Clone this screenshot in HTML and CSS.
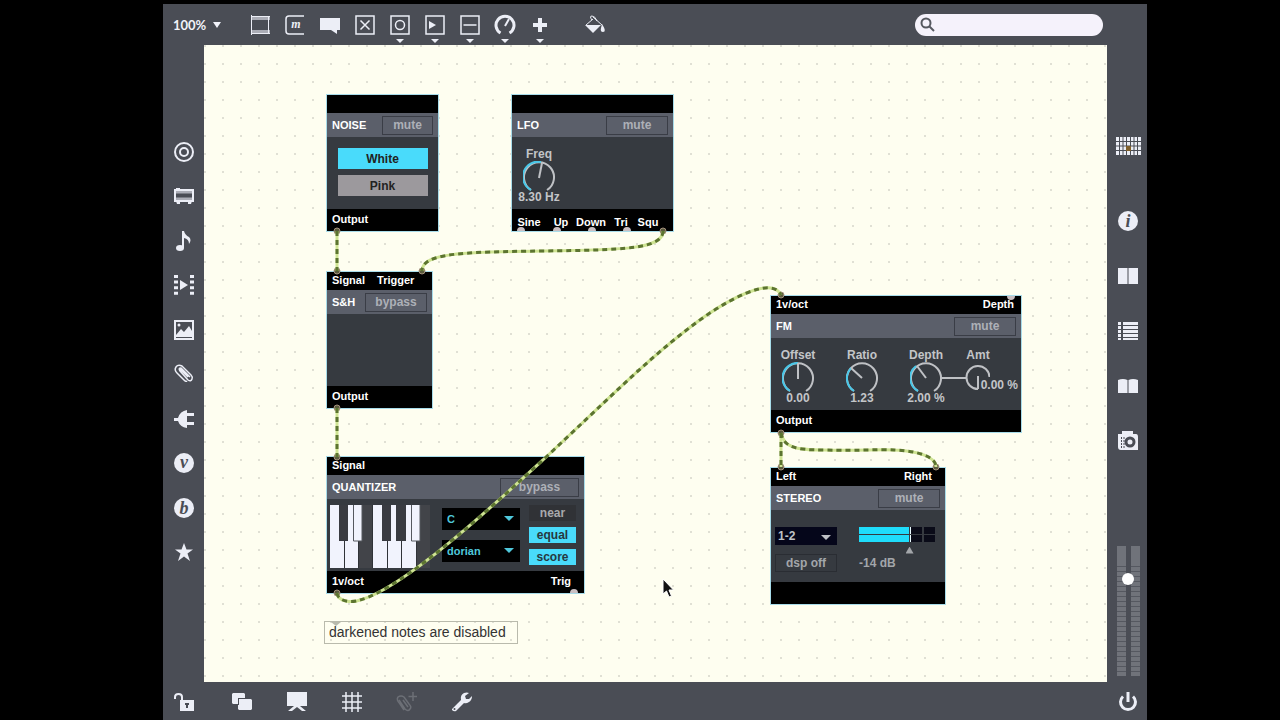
FILE: index.html
```
<!DOCTYPE html>
<html lang="en">
<head>
    <meta charset="UTF-8">
    <meta name="viewport" content="width=device-width, initial-scale=1.0">
    <title>Patcher</title>
    <link rel="stylesheet" href="styles.css">
</head>
<body>
    <div class="app">
        <!-- Top toolbar -->
        <header class="toolbar">
            <button class="zoom-level">100% <span class="caret"></span></button>
            <div class="tools">
                <button class="icon" aria-label="Object"><svg viewBox="0 0 20 20"><path class="line thin" d="M1.500 0V20M18.500 1V19M2 1.500H20M2 18.500H20"/><path class="line dim" d="M2 3.500H20M2 16.500H20"/></svg></button>
                <button class="icon" aria-label="Message"><svg viewBox="0 0 20 20"><path class="line fine" d="M19 1H4Q1 1 1 4V16Q1 19 4 19H19"/><text x="11" y="13" class="glyph small">m</text></svg></button>
                <button class="icon" aria-label="Comment"><svg viewBox="0 0 20 20"><path d="M0 3H20V15H17V19L11 15H0Z"/></svg></button>
                <button class="icon" aria-label="Toggle"><svg viewBox="0 0 20 20"><path class="line fine" d="M1 1H19V19H1ZM5.500 5.500L14.500 14.500M14.500 5.500L5.500 14.500"/></svg></button>
                <button class="icon more" aria-label="Button"><svg viewBox="0 0 20 20"><path class="line fine" d="M1 1H19V19H1Z"/><circle class="line fine" cx="10" cy="10" r="4.500"/></svg></button>
                <button class="icon more" aria-label="Number"><svg viewBox="0 0 20 20"><path class="line fine" d="M1 1H19V19H1Z"/><path d="M4 6L11 10L4 14Z"/></svg></button>
                <button class="icon more" aria-label="Slider"><svg viewBox="0 0 20 20"><path class="line fine" d="M1 1H19V19H1ZM3.500 10H16.500"/></svg></button>
                <button class="icon more" aria-label="Dial"><svg viewBox="0 0 20 20"><path class="line thick" d="M5.500 18A9 9 0 1 1 14.500 18"/><path class="line" d="M10 11L14 4"/></svg></button>
                <button class="icon more" aria-label="Add"><svg viewBox="0 0 20 20"><path d="M8 3H12V8H17V12H12V17H8V12H3V8H8Z"/></svg></button>
                <button class="icon fill-tool" aria-label="Format"><svg viewBox="0 0 20 20"><path class="line thin" d="M7 5Q4 1 7 1Q10 1 12 6M8 2L17 10M8 4L1 10"/><path d="M0 10H16L8 18Z"/><path d="M17 9Q22 17 18 17Q15 17 16 13Z"/></svg></button>
            </div>
            <label class="search">
                <svg viewBox="0 0 18 18" aria-hidden="true"><circle cx="7" cy="7" r="4.500"/><path d="M10.500 10.500L15 15"/></svg>
                <input type="search" aria-label="Search">
            </label>
        </header>

        <!-- Left rail -->
        <nav class="rail rail-left" aria-label="Browser">
            <button class="icon" aria-label="Objects"><svg viewBox="0 0 20 20"><circle class="line" cx="10" cy="10" r="9"/><circle class="line" cx="10" cy="10" r="4"/></svg></button>
            <button class="icon" aria-label="Devices"><svg viewBox="0 0 20 20"><path class="line" d="M1 4H19V15H1Z"/><path class="line dim" d="M2 6H18M2 13H18"/><path d="M2 15H6V18H3ZM14 15H18L17 18H14ZM2 2H6V4H2Z"/></svg></button>
            <button class="icon" aria-label="Audio"><svg viewBox="0 0 20 20"><ellipse cx="6" cy="17" rx="4" ry="3"/><path d="M8 0H10Q11 4 15 6Q18 9 15 13Q15 8 10 7V17H8Z"/></svg></button>
            <button class="icon" aria-label="Video"><svg viewBox="0 0 20 20"><path class="line film" d="M2 0V20M18 0V20"/><path d="M6 5L14 10L6 15Z"/></svg></button>
            <button class="icon" aria-label="Images"><svg viewBox="0 0 20 20"><path class="line" d="M1 1H19V19H1Z"/><path d="M2 15L7 9L10 12L15 6L18 11V17H2Z"/><circle cx="5" cy="5" r="1.500"/></svg></button>
            <button class="icon" aria-label="Snippets"><svg viewBox="0 0 20 20"><path class="line fine" d="M6 7L14 16Q17 18 18 15Q19 13 17 11L8 2Q4 0 2 3Q0 6 3 9L10 16Q12 18 13 17M6 5L14 13M6 7Q4 4 7 4L16 13"/></svg></button>
            <button class="icon" aria-label="Plug-ins"><svg viewBox="0 0 20 20"><path d="M0 9H4Q6 2 13 1V4H20V7H13V13H20V16H13V19Q6 18 4 12H0Z"/></svg></button>
            <button class="icon" aria-label="Vizzie"><svg viewBox="0 0 20 20"><circle cx="10" cy="10" r="10"/><text x="10" y="15" class="glyph cut">v</text></svg></button>
            <button class="icon" aria-label="Beap"><svg viewBox="0 0 20 20"><circle cx="10" cy="10" r="10"/><text x="10" y="16" class="glyph cut">b</text></svg></button>
            <button class="icon" aria-label="Favorites"><svg viewBox="0 0 20 20"><path d="M10 1L12.500 7.500H19L13.500 11.500L16 19L10 14.500L4 19L6.500 11.500L1 7.500H7.500Z"/></svg></button>
        </nav>

        <!-- Patch canvas -->
        <main class="canvas">
            <section class="module noise">
                <div class="ports"></div>
                <div class="title-bar"><h2>NOISE</h2><button class="small">mute</button></div>
                <div class="panel choices">
                    <button class="on">White</button>
                    <button>Pink</button>
                </div>
                <div class="ports"><span>Output</span></div>
            </section>

            <section class="module lfo">
                <div class="ports"></div>
                <div class="title-bar"><h2>LFO</h2><button>mute</button></div>
                <div class="panel knobs">
                    <div class="knob">
                        <span>Freq</span>
                        <svg viewBox="0 0 32 32"><path class="ring" d="M8 29A15 15 0 1 1 24 29"/><path class="level" d="M8 29A15 15 0 0 1 18 1"/><path class="ring" d="M16 17L19 2"/></svg>
                        <span>8.30 Hz</span>
                    </div>
                </div>
                <div class="ports shapes"><span>Sine</span><span>Up</span><span>Down</span><span>Tri</span><span>Squ</span></div>
            </section>

            <section class="module sample-hold">
                <div class="ports"><span>Signal</span><span>Trigger</span></div>
                <div class="title-bar"><h2>S&amp;H</h2><button>bypass</button></div>
                <div class="panel"></div>
                <div class="ports"><span>Output</span></div>
            </section>

            <section class="module quantizer">
                <div class="ports"><span>Signal</span></div>
                <div class="title-bar"><h2>QUANTIZER</h2><button class="wide">bypass</button></div>
                <div class="panel scale">
                    <svg class="keys" viewBox="0 0 100 63">
                        <path class="key-off" d="M29 0H42V63H29ZM87 0H100V63H87Z"/>
                        <path class="key" d="M0 0H14V63H0ZM15 0H28V63H15ZM43 0H57V63H43ZM58 0H71V63H58ZM72 0H86V63H72Z"/>
                        <path class="key-dark" d="M9 0H18V36H9ZM52 0H61V36H52ZM66 0H76V36H66Z"/>
                        <path class="key edged" d="M23.500 -1H32V36H23.500ZM81.500 -1H90V36H81.500Z"/>
                    </svg>
                    <div class="menus">
                        <div class="menu"><select aria-label="Root"><option>C</option></select></div>
                        <div class="menu"><select aria-label="Scale"><option>dorian</option></select></div>
                    </div>
                    <div class="modes">
                        <button class="off">near</button>
                        <button>equal</button>
                        <button>score</button>
                    </div>
                </div>
                <div class="ports"><span>1v/oct</span><span>Trig</span></div>
            </section>

            <section class="module fm">
                <div class="ports"><span>1v/oct</span><span>Depth</span></div>
                <div class="title-bar"><h2>FM</h2><button>mute</button></div>
                <div class="panel knobs">
                    <div class="knob">
                        <span>Offset</span>
                        <svg viewBox="0 0 32 32"><path class="ring" d="M8 29A15 15 0 1 1 24 29"/><path class="level" d="M8 29A15 15 0 0 1 16 1"/><path class="ring" d="M16 17V1"/></svg>
                        <span>0.00</span>
                    </div>
                    <div class="knob">
                        <span>Ratio</span>
                        <svg viewBox="0 0 32 32"><path class="ring" d="M8 29A15 15 0 1 1 24 29"/><path class="level" d="M8 29A15 15 0 0 1 5 6"/><path class="ring" d="M16 16L5 6"/></svg>
                        <span>1.23</span>
                    </div>
                    <div class="knob">
                        <span>Depth</span>
                        <svg viewBox="0 0 32 32"><path class="ring" d="M8 29A15 15 0 1 1 24 29"/><path class="level" d="M8 29A15 15 0 0 1 6 4"/><path class="ring" d="M16 16L7 4"/></svg>
                        <span>2.00 %</span>
                    </div>
                    <div class="amount">
                        <span>Amt</span>
                        <svg viewBox="0 0 48 32"><path class="ring" d="M0 16H24M36 27A11.500 11.500 0 1 1 47.500 15M36 14V27"/></svg>
                        <span class="amount-value">0.00 %</span>
                    </div>
                </div>
                <div class="ports"><span>Output</span></div>
            </section>

            <section class="module stereo">
                <div class="ports"><span>Left</span><span>Right</span></div>
                <div class="title-bar"><h2>STEREO</h2><button>mute</button></div>
                <div class="panel mixer">
                    <div class="menu"><select aria-label="Output channels"><option>1-2</option></select></div>
                    <input class="gain" type="range" min="-70" max="6" value="-18" aria-label="Gain">
                    <button>dsp off</button>
                    <span class="db">-14 dB</span>
                </div>
                <div class="ports"></div>
            </section>

            <p class="comment">darkened notes are disabled</p>

            <!-- Patch cords -->
            <svg class="cords">
                <path class="jack" d="M313 186a4 4 0 0 1 8 0M349 186a4 4 0 0 1 8 0M384 186a4 4 0 0 1 8 0M419 186a4 4 0 0 1 8 0M366 548a4 4 0 0 1 8 0M803 251a4 4 0 0 0 8 0"/>
                <g class="jack live">
                    <circle cx="133" cy="186" r="3"/><circle cx="459" cy="186" r="3"/><circle cx="133" cy="226" r="3"/><circle cx="218" cy="226" r="3"/>
                    <circle cx="133" cy="363" r="3"/><circle cx="133" cy="412" r="3"/><circle cx="133" cy="548" r="3"/><circle cx="577" cy="250" r="3"/>
                    <circle cx="577" cy="388" r="3"/><circle cx="577" cy="422" r="3"/><circle cx="732" cy="422" r="3"/>
                </g>
                <g class="cord">
                    <path d="M133 186V226M133 363V412M577 388V422"/>
                    <path d="M459 186C459 204 420 205 339 206S218 208 218 226"/>
                    <path d="M133 548C134 557 148 558 156 555C200 543 290 460 340 414C400 358 440 318 480 287C520 255 568 230 577 250"/>
                    <path d="M577 388C580 402 590 405 620 405C655 406 675 404 690 405C715 406 732 412 732 422"/>
                </g>
                <g class="cord dashes">
                    <path d="M133 186V226M133 363V412M577 388V422"/>
                    <path d="M459 186C459 204 420 205 339 206S218 208 218 226"/>
                    <path d="M133 548C134 557 148 558 156 555C200 543 290 460 340 414C400 358 440 318 480 287C520 255 568 230 577 250"/>
                    <path d="M577 388C580 402 590 405 620 405C655 406 675 404 690 405C715 406 732 412 732 422"/>
                </g>
            </svg>

            <svg class="pointer" viewBox="0 0 12 20"><path d="M1 1V16L4.500 13L7 19L9.500 18L7 12H11.500Z"/></svg>
        </main>

        <!-- Right rail -->
        <aside class="rail rail-right">
            <button class="icon piano" aria-label="Grid keyboard"><svg viewBox="0 0 25 20"><path d="M0 1H25V19H0Z"/><path class="cut-line" d="M3.500 1V19M7 1V19M10.500 1V19M14.500 1V19M18 1V19M21.500 1V19M0 5.500H25M0 10H25M0 14.500H25"/><rect class="spot" x="10" y="10" width="5" height="5"/></svg></button>
            <button class="icon" aria-label="Inspector"><svg viewBox="0 0 20 20"><circle cx="10" cy="10" r="10"/><text x="10" y="16" class="glyph cut">i</text></svg></button>
            <button class="icon" aria-label="Reference"><svg viewBox="0 0 20 20"><path d="M0 2H9.500V18H0ZM10.500 2H20V18H10.500Z"/></svg></button>
            <button class="icon" aria-label="Console"><svg viewBox="0 0 20 20"><path d="M0 1H3V4H0ZM5 1H20V4H5ZM0 5H3V8H0ZM5 5H20V8H5ZM0 9H3V12H0ZM5 9H20V12H5ZM0 13H3V16H0ZM5 13H20V16H5ZM0 17H3V19H0ZM5 17H20V19H5Z"/></svg></button>
            <button class="icon" aria-label="Lessons"><svg viewBox="0 0 20 20"><path d="M0 4Q5 2 9.500 4V17H0ZM10.500 4Q15 2 20 4V17H10.500Z"/></svg></button>
            <button class="icon" aria-label="Snapshots"><svg viewBox="0 0 20 20"><path d="M0 3H4V0H15V3H18Q20 3 20 6V19H3Q0 19 0 16Z"/><circle class="cut-line lens" cx="12" cy="11" r="4"/><path class="cut-line film" d="M3.500 6V17M6 6V17"/></svg></button>
            <input class="volume" type="range" value="77" aria-label="Volume">
        </aside>

        <!-- Bottom toolbar -->
        <footer class="toolbar bottom">
            <button class="icon" aria-label="Lock"><svg viewBox="0 0 20 20"><path class="line" d="M1 7V5Q1 2 4.500 2T8 5V9"/><path d="M6 8H20V19H6Z"/><path class="cut-fill" d="M11 11H15V13H14V16H12V13H11Z"/></svg></button>
            <div class="view-tools">
                <button class="icon" aria-label="Windows"><svg viewBox="0 0 20 20"><path d="M1 1H12L13 2V6H6V12H1L0 11V2ZM7 7H19L20 8V17L19 18H7L6 17V13V13H7Z"/></svg></button>
                <button class="icon" aria-label="Presentation"><svg viewBox="0 0 20 20"><path d="M0 0H20V14H13L19 19H15L10 15L5 19H1L7 14H0Z"/></svg></button>
                <button class="icon" aria-label="Grid"><svg viewBox="0 0 20 20"><path class="line fine" d="M4 0V20M10 0V20M16 0V20M0 4H20M0 10H20M0 16H20"/></svg></button>
                <button class="icon" aria-label="Add snippet" disabled><svg viewBox="0 0 20 20"><path class="line fine" d="M2 8L8 17Q11 20 13 17Q15 15 12 12L7 5Q4 3 1 5Q-1 8 3 12L7 18M6 8L11 15M16 0V9M11.500 4.500H20"/></svg></button>
                <button class="icon" aria-label="Tools"><svg viewBox="0 0 20 20"><path d="M0 17L9 8Q8 3 12 1Q15 0 17 1L13 4L14 7L17 7L20 4Q20 8 17 10Q14 12 12 11L4 19Q2 20 0 18Z"/><circle class="cut-fill" cx="2.500" cy="17" r="1"/></svg></button>
            </div>
            <button class="icon power" aria-label="Audio on"><svg viewBox="0 0 20 20"><path class="line thick" d="M5 4.500A7.500 7.500 0 1 0 15 4.500M10 0V10"/></svg></button>
        </footer>
    </div>
</body>
</html>
```
FILE: styles.css
```
* { margin: 0; padding: 0; box-sizing: border-box; }
body { background: #000; font-family: "Liberation Sans", Arial, sans-serif; font-size: 12px; font-weight: bold; }
button, input, select { font: inherit; color: inherit; background: none; border: none; outline: none; }
button { cursor: pointer; white-space: nowrap; }

.app { display: grid; grid-template: 41px 1fr 38px / 41px 1fr 40px; min-height: 100vh; margin: 0 133px 0 163px; border-top: 4px solid #000; background: #4a4d55; }

/* Toolbars */
.toolbar { grid-column: 1 / -1; display: flex; align-items: center; color: #f2f3fa; }
.zoom-level { display: flex; align-items: center; gap: 7px; width: 87px; padding-left: 10px; font-family: Lato, sans-serif; font-size: 13px; }
.caret { border: 4px solid transparent; border-top: 6px solid #f2f3fa; border-bottom: none; }
.tools { display: flex; gap: 15px; }
.fill-tool { margin-left: 20px; }
.icon { position: relative; flex: none; width: 20px; height: 20px; color: #eceef6; }
.icon svg { display: block; width: 100%; height: 100%; fill: currentColor; overflow: visible; }
.icon .line { fill: none; stroke: currentColor; stroke-width: 2; }
.icon .fine { stroke-width: 1.500; }
.icon .thin { stroke-width: 1; }
.icon .dim { stroke-width: 3; opacity: 0.6; }
.icon .thick { stroke-width: 3; }
.icon .film { stroke-width: 4; stroke-dasharray: 3 2.600; }
.icon .glyph { font: italic bold 18px "Liberation Serif", serif; text-anchor: middle; }
.icon .glyph.small { font-size: 12px; }
.icon .cut, .icon .cut-fill { fill: #4a4d55; }
.icon .cut-line { fill: none; stroke: #4a4d55; stroke-width: 1; }
.icon .lens { stroke-width: 3; }
.icon .cut-line.film { stroke-width: 1; stroke-dasharray: 2 1; }
.icon .spot { fill: #80602c; }
.icon:disabled { color: #6c6f76; }
.more::after { content: ""; position: absolute; left: 6px; top: 24px; border: 4px solid transparent; border-top-color: #eceef6; border-bottom: none; }
.search { display: flex; align-items: center; width: 188px; height: 22px; margin: 0 44px 0 auto; padding: 0 4px; border-radius: 11px; background: #f5f2fb; color: #222; }
.search svg { flex: none; width: 18px; height: 18px; fill: none; stroke: #565960; stroke-width: 2; }
.search input { flex: 1; min-width: 0; }
.bottom { padding: 2px 9px 0 11px; }
.view-tools { display: flex; gap: 35px; margin-left: 38px; }
.power { margin-left: auto; }

/* Side rails */
.rail { display: flex; flex-direction: column; align-items: center; }
.rail-left { justify-content: space-between; padding: 97px 0 120px; }
.rail-right { gap: 35px; padding: 91px 0 6px 2px; }
.piano { width: 25px; margin-bottom: 20px; }
.volume { appearance: none; writing-mode: vertical-lr; direction: rtl; width: 23px; height: 130px; margin-top: auto;
    background: linear-gradient(90deg, transparent 9px, #4a4d55 9px 14px, transparent 14px), linear-gradient(#70737a 20px, transparent 20px), repeating-linear-gradient(#555860 0 1px, #70737a 1px 5px); }
.volume::-webkit-slider-thumb { appearance: none; width: 12px; height: 12px; border-radius: 50%; background: #fff; }

/* Canvas */
.canvas { position: relative; overflow: hidden; background: #fefef0 radial-gradient(circle at 1px 1px, #e0e0d4 1px, transparent 1px) 0 0 / 18px 18px; }
.module { position: absolute; border: 1px solid #a8dcea; background: #363a40; color: #c3c5c8; }
.noise { left: 122px; top: 49px; width: 113px; }
.lfo { left: 307px; top: 49px; width: 163px; }
.sample-hold { left: 122px; top: 226px; width: 107px; }
.quantizer { left: 122px; top: 411px; width: 259px; }
.fm { left: 566px; top: 250px; width: 252px; }
.stereo { left: 566px; top: 422px; width: 176px; }

.ports { display: flex; gap: 12px; height: 18px; padding: 0 5px; background: #000; color: #fff; font-size: 11px; line-height: 16px; }
.panel + .ports { height: 22px; line-height: 20px; }
.fm .ports, .quantizer .ports, .stereo .ports { justify-content: space-between; }
.fm .ports { padding-right: 7px; }
.quantizer .ports, .stereo .ports { padding-right: 13px; }
.panel + .shapes { display: grid; grid-template-columns: 34px 30px 30px 30px 24px; gap: 0; padding: 0; line-height: 26px; text-align: center; }

.title-bar { display: flex; align-items: center; justify-content: space-between; height: 24px; padding: 0 5px; background: #5b5f6a; }
.title-bar h2 { font-size: 11px; color: #fff; }
.title-bar button { width: 62px; height: 19px; border: 1px solid #3a3d46; color: #adb0b7; }
.title-bar .small { width: 51px; }
.title-bar .wide { width: 79px; }

.panel { height: 72px; }
.choices { display: flex; flex-direction: column; align-items: center; gap: 6px; padding-top: 11px; }
.choices button { width: 90px; height: 21px; background: #9c999d; color: #222; }
.choices .on { background: #49dbfb; }

.knobs { display: flex; gap: 16px; padding: 10px 3px 0; }
.knob { display: flex; flex-direction: column; align-items: center; width: 48px; line-height: 14px; white-space: nowrap; }
.knob svg { flex: none; width: 32px; height: 32px; margin-bottom: -3px; }
.ring, .level { fill: none; stroke: #bfc1c5; stroke-width: 2; }
.level { stroke: #49c7e8; }
.amount { display: flex; flex-direction: column; align-items: center; width: 76px; margin-left: -24px; line-height: 14px; }
.amount span { padding-right: 4px; }
.amount svg { align-self: flex-start; width: 48px; height: 32px; }
.amount .amount-value { align-self: flex-end; margin-top: -16px; padding: 0; }

.scale { display: flex; align-items: flex-start; padding: 6px 3px; }
.keys { width: 100px; height: 63px; background: #303338; }
.key { fill: #f1f3fd; }
.key-off { fill: #424449; }
.key-dark { fill: #393b41; }
.edged { stroke: #55585f; stroke-width: 1; }
.menus { display: grid; gap: 10px; margin: 3px 9px 0 12px; }
.menu { position: relative; width: 78px; height: 22px; background: #000; color: #4fc8dc; }
.menu::after { content: ""; position: absolute; right: 6px; top: 8px; border: 5px solid transparent; border-top-color: currentColor; border-bottom: none; pointer-events: none; }
.menu select { appearance: none; width: 100%; height: 100%; padding-left: 5px; font-size: 11px; }
.modes { display: grid; gap: 6px; }
.modes button { width: 47px; height: 16px; background: #49dbfb; color: #263840; }
.modes .off { background: #303236; color: #a9a9ac; }

.mixer { display: grid; grid-template-columns: 62px 76px; gap: 9px 22px; align-content: start; padding: 17px 4px; }
.mixer .menu { width: 62px; height: 18px; background: #05061a; color: #bfc1c5; }
.mixer .menu select { padding-left: 3px; font-size: 12px; }
.mixer button { height: 18px; border: 1px solid #2a2d33; color: #a3a6aa; }
.db { line-height: 18px; color: #a3a6aa; }
.gain { appearance: none; width: 76px; height: 18px; overflow: visible;
    background: linear-gradient(#363a40, #363a40) 0 7px / 100% 1px no-repeat, linear-gradient(90deg, #1fdcfb 50px, #363a40 50px 51px, #e9fbff 51px 52px, #0a0b18 52px 63px, #363a40 63px 65px, #0a0b18 65px) 0 0 / 100% 15px no-repeat; }
.gain::-webkit-slider-thumb { appearance: none; width: 8px; height: 7px; margin-top: 28px; background: #a3a6aa; clip-path: polygon(50% 0, 100% 100%, 0 100%); }

.comment { position: absolute; left: 120px; top: 576px; padding: 0 11px 0 4px; border: 1px solid #b9baac; color: #333; font-size: 14px; font-weight: normal; line-height: 21px; }
.comment::before { content: ""; position: absolute; left: 6px; top: 0; border: 5px solid transparent; border-top: 4px solid #b9baac; border-bottom: none; }

.cords { position: absolute; inset: 0; width: 100%; height: 100%; pointer-events: none; }
.jack { fill: #c9bfc2; }
.jack.live { fill: #5a5b3d; stroke: #a3907d; stroke-width: 1; }
.cord { fill: none; stroke: #cfe493; stroke-width: 3; }
.dashes { stroke: #5c7430; stroke-dasharray: 5 4; }
.pointer { position: absolute; left: 458px; top: 533px; width: 12px; height: 20px; fill: #111; stroke: #fff; stroke-width: 1; }
```
